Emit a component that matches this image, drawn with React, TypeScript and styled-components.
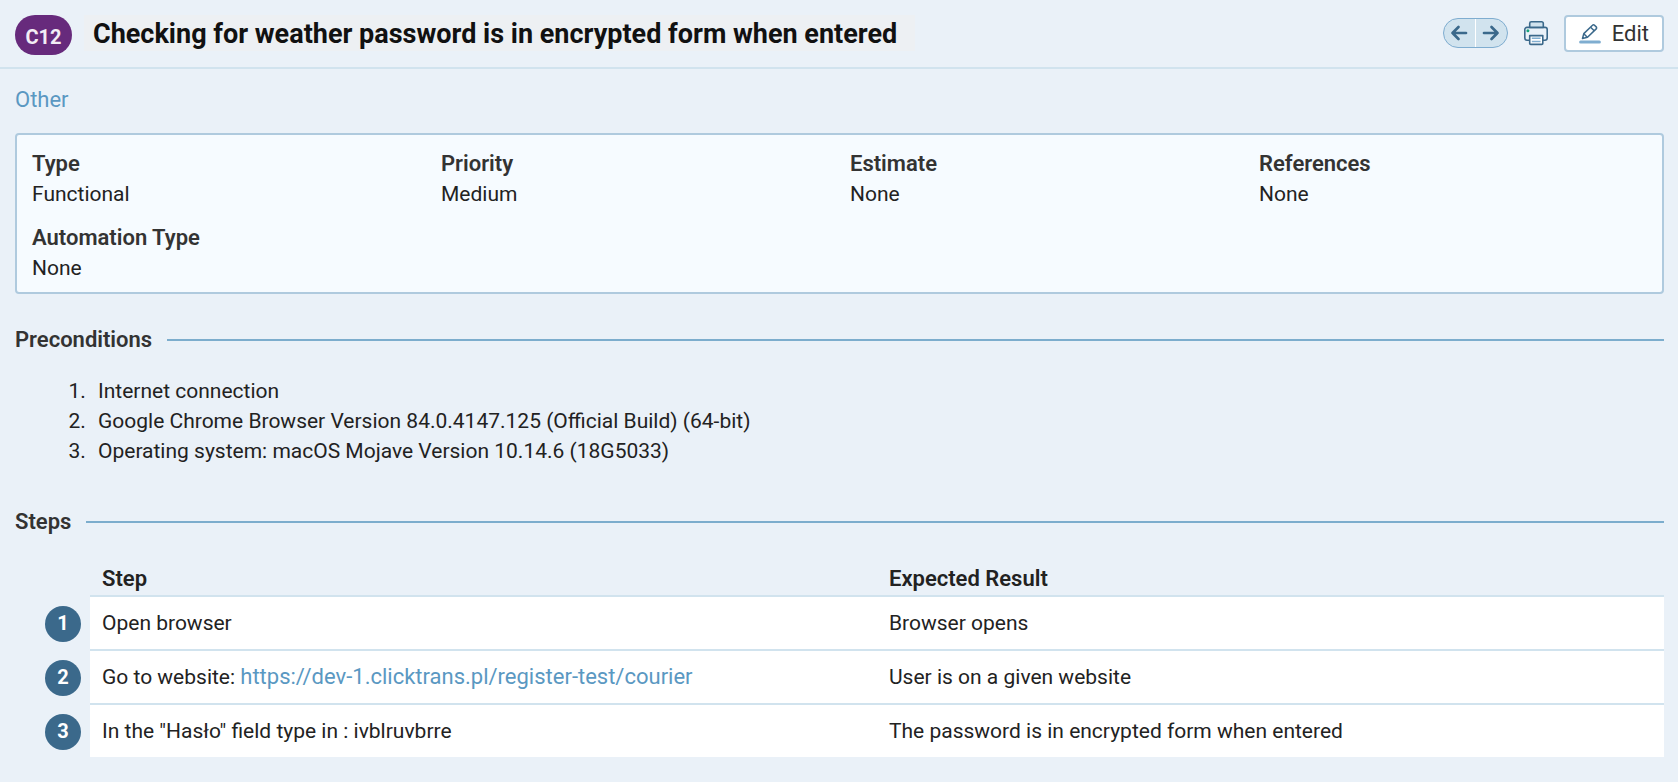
import React from "react";
import styled, { createGlobalStyle } from "styled-components";

const GlobalStyle = createGlobalStyle`
  * { box-sizing: border-box; }
  body {
    margin: 0;
    background: #eaf1f8;
    color: #222222;
    font-family: Roboto, "Liberation Sans", sans-serif;
    font-size: 21px;
    line-height: 30px;
  }
`;

const Header = styled.header`
  display: flex;
  align-items: flex-start;
  padding: 15px 14px 12px 15px;
  border-bottom: 2px solid #d1e3ee;
`;

const CaseBadge = styled.span`
  flex: none;
  min-width: 57px;
  padding: 4px 10px 0;
  border-radius: 20px;
  background: #672a7c;
  color: #f3edf5;
  font-size: 20px;
  font-weight: 700;
  line-height: 36px;
  text-align: center;
`;

const Title = styled.h1`
  margin: 0 auto 0 12px;
  padding: 2px 18px 0 9px;
  background: #edf0f3;
  color: #111111;
  font-size: 27px;
  font-weight: 700;
  line-height: 34px;
`;

const Actions = styled.div`
  display: flex;
  flex: none;
  align-items: flex-start;
  gap: 15px;
`;

const Pager = styled.nav`
  display: flex;
  width: 65px;
  height: 30px;
  margin-top: 3px;
  border: 1px solid #7fadd0;
  border-radius: 15px;
  background: #d1e3ee;
  overflow: hidden;
`;

const PagerLink = styled.a`
  display: flex;
  flex: 1;
  align-items: center;
  justify-content: center;

  & + & {
    border-left: 1px solid #ffffff;
  }
`;

const IconButton = styled.button`
  display: flex;
  margin-top: 5px;
  padding: 0;
  border: 0;
  background: none;
`;

const EditButton = styled.button`
  display: flex;
  align-items: center;
  gap: 11px;
  height: 37px;
  padding: 0 13px;
  border: 2px solid #afcade;
  border-radius: 4px;
  background: #ffffff;
  color: #333333;
  font: inherit;
  font-size: 22px;
`;

const Content = styled.main`
  padding: 16px 14px 25px 15px;
`;

const Link = styled.a`
  color: #5a98c2;
  font-size: 22px;
  text-decoration: none;
`;

const Properties = styled.dl`
  display: grid;
  grid-template-columns: repeat(4, 1fr);
  gap: 14px 16px;
  margin: 18px 0 31px;
  padding: 14px 10px 9px 15px;
  border: 2px solid #afcade;
  border-radius: 4px;
  background: #f6fbff;
`;

const PropertyName = styled.dt`
  color: #333333;
  font-size: 22px;
  font-weight: 600;
`;

const PropertyValue = styled.dd`
  margin: 0;
`;

const SectionTitle = styled.h2`
  display: flex;
  align-items: center;
  gap: 15px;
  margin: 0;
  color: #333333;
  font-size: 22px;
  font-weight: 600;

  &::after {
    content: "";
    flex: 1;
    height: 2px;
    background: #7cadcd;
  }
`;

const Preconditions = styled.ol`
  margin: 21px 0 41px;
  padding-left: 76px;
`;

const Precondition = styled.li`
  padding-left: 7px;
`;

const StepsTable = styled.table`
  width: 100%;
  margin-top: 27px;
  border-spacing: 0;
  table-layout: fixed;
`;

const HeadCell = styled.th`
  padding: 0 12px 1px;
  border-bottom: 2px solid #d1e3ee;
  color: #222222;
  font-size: 22px;
  font-weight: 600;
  text-align: left;
`;

const IndexHead = styled.td`
  width: 75px;
  padding: 0;
`;

const IndexCell = styled.td`
  padding: 9px 9px 0 30px;
  vertical-align: top;
`;

const StepNumber = styled.span`
  display: block;
  width: 36px;
  height: 36px;
  border-radius: 50%;
  background: #3b698b;
  color: #ffffff;
  font-size: 20px;
  font-weight: 700;
  line-height: 34px;
  text-align: center;
`;

const StepCell = styled.td`
  height: 54px;
  padding: 11px 12px;
  border-bottom: 2px solid #d1e3ee;
  background: #ffffff;

  tr:last-child > & {
    height: 52px;
    border-bottom: 0;
  }
`;

const ArrowIcon = ({ direction }: { direction: "left" | "right" }) => (
  <svg width="18" height="16" viewBox="0 0 18 16" fill="none" stroke="#3b698b" strokeWidth="2.7" strokeLinecap="round" strokeLinejoin="round" aria-hidden="true">
    {direction === "left" ? <path d="M16 8H2.5M8.5 2L2.5 8l6 6" /> : <path d="M2 8h13.5M9.5 2l6 6-6 6" />}
  </svg>
);

const PrinterIcon = () => (
  <svg width="26" height="26" viewBox="0 0 26 26" fill="none" stroke="#3b698b" strokeWidth="1.6" strokeLinejoin="round" aria-hidden="true">
    <path d="M6.2 20.3H4A2.2 2.2 0 0 1 1.8 18.1V9.6A2.2 2.2 0 0 1 4 7.4H22A2.2 2.2 0 0 1 24.2 9.6V18.1A2.2 2.2 0 0 1 22 20.3H19.8" />
    <path d="M6.7 7.4V3.4A1.6 1.6 0 0 1 8.3 1.8H18.7A1.6 1.6 0 0 1 20.3 3.4V7.4Z" fill="#d1e3ee" />
    <path d="M6.7 15.6H19.8V23.4A1 1 0 0 1 18.8 24.4H7.7A1 1 0 0 1 6.7 23.4Z" fill="#ffffff" />
    <path d="M8.8 18.2h8.8M8.8 21.5h8.8" stroke="#7fadd0" />
    <circle cx="4.9" cy="10.7" r="1.5" fill="#16a37b" stroke="none" />
  </svg>
);

const PencilIcon = () => (
  <svg width="22" height="20" viewBox="0 0 22 20" fill="none" stroke="#3b698b" strokeWidth="1.5" strokeLinejoin="round" aria-hidden="true">
    <path d="M3.5 14.5l1.3-4.9L13.5 1.2a1.4 1.4 0 0 1 2 0l1.7 1.7a1.4 1.4 0 0 1 0 2L8.5 13.3z" />
    <path d="M11.6 3.2l3.6 3.6M4.8 9.8l3.5 3.4" />
    <path d="M1.6 18h18.8" stroke="#7fadd0" strokeWidth="3" strokeLinecap="round" />
  </svg>
);

const properties = [
  ["Type", "Functional"],
  ["Priority", "Medium"],
  ["Estimate", "None"],
  ["References", "None"],
  ["Automation Type", "None"],
];

const preconditions = [
  "Internet connection",
  "Google Chrome Browser Version 84.0.4147.125 (Official Build) (64-bit)",
  "Operating system: macOS Mojave Version 10.14.6 (18G5033)",
];

const testUrl = "https://dev-1.clicktrans.pl/register-test/courier";

const steps: { action: React.ReactNode; expected: string }[] = [
  { action: "Open browser", expected: "Browser opens" },
  { action: <>Go to website: <Link href={testUrl}>{testUrl}</Link></>, expected: "User is on a given website" },
  { action: 'In the "Hasło" field type in : ivblruvbrre', expected: "The password is in encrypted form when entered" },
];

export default function App() {
  return (
    <>
      <GlobalStyle />
      <Header>
        <CaseBadge>C12</CaseBadge>
        <Title>Checking for weather password is in encrypted form when entered</Title>
        <Actions>
          <Pager aria-label="Test cases">
            <PagerLink href="#previous" aria-label="Previous test case"><ArrowIcon direction="left" /></PagerLink>
            <PagerLink href="#next" aria-label="Next test case"><ArrowIcon direction="right" /></PagerLink>
          </Pager>
          <IconButton type="button" aria-label="Print"><PrinterIcon /></IconButton>
          <EditButton type="button"><PencilIcon />Edit</EditButton>
        </Actions>
      </Header>
      <Content>
        <Link href="#other">Other</Link>
        <Properties>
          {properties.map(([name, value]) => (
            <div key={name}>
              <PropertyName>{name}</PropertyName>
              <PropertyValue>{value}</PropertyValue>
            </div>
          ))}
        </Properties>
        <SectionTitle>Preconditions</SectionTitle>
        <Preconditions>
          {preconditions.map((text) => <Precondition key={text}>{text}</Precondition>)}
        </Preconditions>
        <SectionTitle>Steps</SectionTitle>
        <StepsTable>
          <thead>
            <tr>
              <IndexHead />
              <HeadCell scope="col">Step</HeadCell>
              <HeadCell scope="col">Expected Result</HeadCell>
            </tr>
          </thead>
          <tbody>
            {steps.map((step, index) => (
              <tr key={step.expected}>
                <IndexCell><StepNumber>{index + 1}</StepNumber></IndexCell>
                <StepCell>{step.action}</StepCell>
                <StepCell>{step.expected}</StepCell>
              </tr>
            ))}
          </tbody>
        </StepsTable>
      </Content>
    </>
  );
}
